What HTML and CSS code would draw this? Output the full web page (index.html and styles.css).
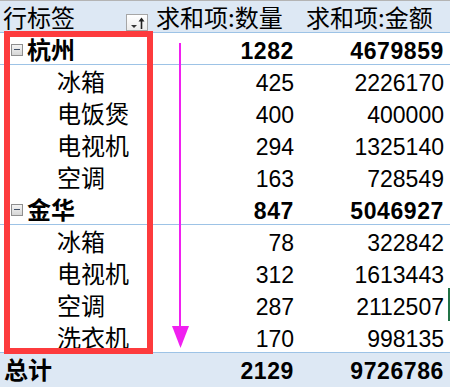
FILE: index.html
```html
<!DOCTYPE html>
<html lang="zh-CN">
<head>
<meta charset="utf-8">
<title>数据透视表</title>
<link rel="stylesheet" href="styles.css">
</head>
<body>
<div class="sheet">
  <div class="row head">
    <div class="cell label head-label"><span>行标签</span>
      <span class="filter-btn"><svg width="20" height="14" viewBox="0 0 20 14"><polygon points="4,9 10,9 7,12" fill="#333"/><line x1="14.5" y1="3" x2="14.5" y2="13" stroke="#222" stroke-width="1.6"/><polygon points="11.5,5.5 17.5,5.5 14.5,1.5" fill="#222"/></svg></span>
    </div>
    <div class="cell htext">求和项:数量</div>
    <div class="cell htext">求和项:金额</div>
  </div>

  <div class="row group line">
    <div class="cell label"><span class="minus"></span><span>杭州</span></div>
    <div class="cell num">1282</div>
    <div class="cell num">4679859</div>
  </div>
  <div class="row item line">
    <div class="cell label">冰箱</div>
    <div class="cell num">425</div>
    <div class="cell num">2226170</div>
  </div>
  <div class="row item">
    <div class="cell label">电饭煲</div>
    <div class="cell num">400</div>
    <div class="cell num">400000</div>
  </div>
  <div class="row item">
    <div class="cell label">电视机</div>
    <div class="cell num">294</div>
    <div class="cell num">1325140</div>
  </div>
  <div class="row item">
    <div class="cell label">空调</div>
    <div class="cell num">163</div>
    <div class="cell num">728549</div>
  </div>

  <div class="row group">
    <div class="cell label"><span class="minus"></span><span>金华</span></div>
    <div class="cell num">847</div>
    <div class="cell num">5046927</div>
  </div>
  <div class="row item line">
    <div class="cell label">冰箱</div>
    <div class="cell num">78</div>
    <div class="cell num">322842</div>
  </div>
  <div class="row item">
    <div class="cell label">电视机</div>
    <div class="cell num">312</div>
    <div class="cell num">1613443</div>
  </div>
  <div class="row item">
    <div class="cell label">空调</div>
    <div class="cell num">287</div>
    <div class="cell num sel">2112507</div>
  </div>
  <div class="row item">
    <div class="cell label">洗衣机</div>
    <div class="cell num">170</div>
    <div class="cell num">998135</div>
  </div>

  <div class="row total line">
    <div class="cell label">总计</div>
    <div class="cell num">2129</div>
    <div class="cell num">9726786</div>
  </div>

  <div class="red-box"></div>
  <svg class="arrow" width="24" height="312" viewBox="0 0 24 312">
    <line x1="10" y1="3" x2="10" y2="292" stroke="#f020f0" stroke-width="2"/>
    <polygon points="2,286 19,286 10.5,308" fill="#f020f0"/>
  </svg>
  <div class="green-mark"></div>
</div>
</body>
</html>
```
FILE: styles.css
```css
* { box-sizing: border-box; }
html, body { margin: 0; padding: 0; background: #ffffff; }
body {
  width: 450px;
  height: 387px;
  overflow: hidden;
  font-family: "Noto Sans CJK SC", "Liberation Sans", sans-serif;
  color: #000;
}
.sheet {
  position: relative;
  width: 450px;
  height: 387px;
}
.row {
  display: grid;
  grid-template-columns: 152px 149px 149px;
  height: 32px;
  border-top: 1px solid transparent;
}
.row.line { border-top-color: #9dc3e6; }
.row.head {
  background: #dde8f4;
  border-top-color: #b4b4b4;
}
.row.total {
  background: #dde8f4;
  height: 35px;
}
.cell {
  font-size: 24px;
  line-height: 30px;
  padding-top: 1px;
  white-space: nowrap;
}
.label {
  display: flex;
  align-items: flex-start;
  padding-left: 3px;
}
.head-label {
  justify-content: space-between;
  padding-right: 4px;
}
.filter-btn {
  align-self: flex-end;
  width: 22px;
  height: 17px;
  margin-bottom: 1px;
  border: 1px solid #a6a6a6;
  background: linear-gradient(#ffffff, #ececec);
  display: flex;
  align-items: center;
  justify-content: center;
}
.filter-btn svg { display: block; }
.htext { padding-left: 4px; }
.head .htext:last-child { padding-left: 5px; }
.group .cell { font-weight: bold; }
.group .label { padding-left: 11px; }
.minus {
  width: 12px;
  height: 12px;
  margin-top: 10px;
  margin-right: 4px;
  border: 1px solid #8f8f8f;
  background: linear-gradient(#f4f4f4, #d6d6d6);
  position: relative;
}
.minus::after {
  content: "";
  position: absolute;
  left: 2px;
  right: 2px;
  top: 4px;
  height: 1px;
  background: #3f4f66;
}
.item .label { padding-left: 57px; }
.total .label { font-weight: bold; padding-left: 4px; }
.num {
  font-family: "Liberation Sans", sans-serif;
  font-size: 23px;
  text-align: right;
  padding-top: 3px;
}
.row .num:nth-child(2) { padding-right: 7px; }
.row .num:nth-child(3) { padding-right: 6px; }
.group .num, .total .num {
  font-weight: bold;
  letter-spacing: 0.6px;
}
.red-box {
  position: absolute;
  left: 4px;
  top: 31px;
  width: 149px;
  height: 323px;
  border: 6px solid #fd3b3d;
}
.arrow {
  position: absolute;
  left: 170px;
  top: 40px;
}
.green-mark {
  position: absolute;
  left: 448px;
  top: 288px;
  width: 2px;
  height: 33px;
  background: #217346;
}
```
